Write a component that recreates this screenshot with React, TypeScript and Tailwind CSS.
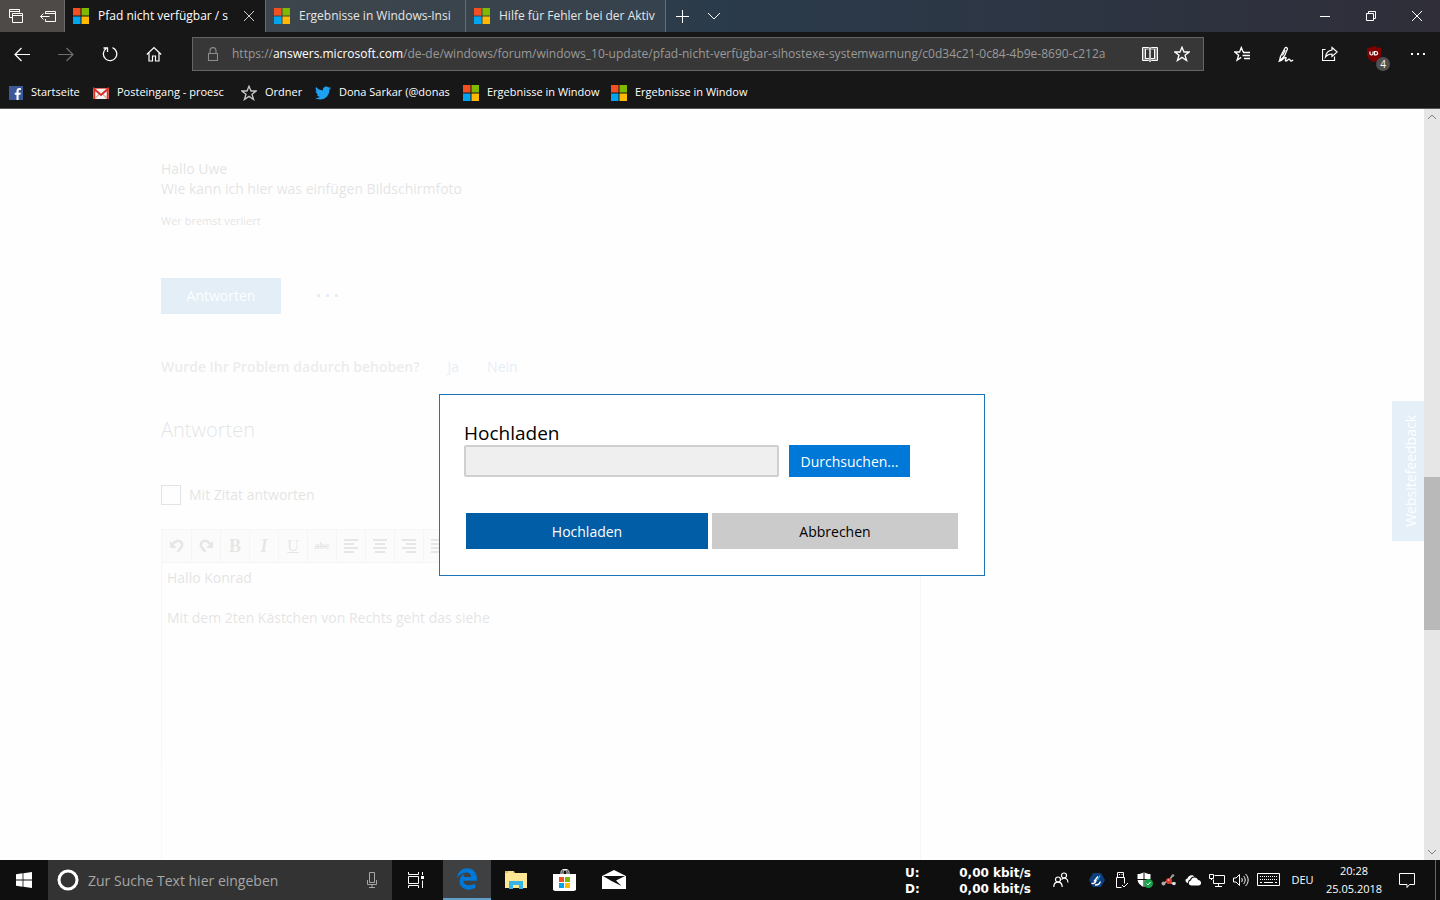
import { type ReactNode } from 'react';
import { FaEdgeLegacy, FaTwitter } from 'react-icons/fa6';

type IconProps = { size?: number; className?: string; children: ReactNode; strokeWidth?: number };

function Icon({ size = 16, className = '', children, strokeWidth = 1 }: IconProps) {
  return (
    <svg
      width={size}
      height={size}
      viewBox={`0 0 ${size} ${size}`}
      fill="none"
      stroke="currentColor"
      strokeWidth={strokeWidth}
      className={`shrink-0 ${className}`}
      aria-hidden="true"
    >
      {children}
    </svg>
  );
}

function MicrosoftLogo() {
  return (
    <Icon>
      <g stroke="none">
        <path fill="#f25022" d="M0 0h7.5v7.5H0z" />
        <path fill="#7fba00" d="M8.5 0H16v7.5H8.5z" />
        <path fill="#00a4ef" d="M0 8.5h7.5V16H0z" />
        <path fill="#ffb900" d="M8.5 8.5H16V16H8.5z" />
      </g>
    </Icon>
  );
}

function StarIcon({ className = '' }: { className?: string }) {
  return (
    <Icon className={className} strokeWidth={1.3}>
      <path d="M8 1.2 10 6h5.2l-4.2 3.3 1.6 5.2L8 11.4l-4.6 3.1L5 9.3.8 6H6z" />
    </Icon>
  );
}

const inactiveTabs = ['Ergebnisse in Windows-Insi', 'Hilfe für Fehler bei der Aktiv'];

function TabBar() {
  return (
    <div className="flex h-8 shrink-0 bg-linear-to-r from-[#4f4b48] via-[#2a3b4b] to-[#2f2e39] text-[#e6e6e6]">
      <div className="flex w-[65px] border-r border-[#6b6b6b] bg-[#4e4a48]">
        <button aria-label="Tabs anzeigen" className="flex w-8 items-center justify-center text-white">
          <Icon>
            <path d="M11.500 4.500V1.500H1.500v8h3M1.500 3.500h10M4.500 5.500h10v9h-10zM4.500 7.500h10" />
          </Icon>
        </button>
        <button aria-label="Tabs beiseitelegen" className="flex w-8 items-center justify-center text-white">
          <Icon>
            <path d="M5.500 6V3.500h10v10h-10V11M5.500 5.500h10M.5 8.500h9M3.500 5.500l-3 3 3 3" />
          </Icon>
        </button>
      </div>
      <div className="flex w-[200px] items-center bg-[#171717] pl-2 text-white">
        <button className="flex min-w-0 flex-1 items-center gap-[9px]">
          <MicrosoftLogo />
          <span className="overflow-hidden whitespace-nowrap text-left">Pfad nicht verfügbar / s</span>
        </button>
        <button aria-label="Tab schließen" className="flex h-8 w-8 items-center justify-center text-[#d0d0d0]">
          <Icon size={12}>
            <path d="m1 1 10 10M11 1 1 11" />
          </Icon>
        </button>
      </div>
      {inactiveTabs.map((title) => (
        <button
          key={title}
          className="flex w-[200px] items-center gap-[9px] border-l border-[#6b6b6b] bg-[#3c464f]/60 pr-2 pl-2"
        >
          <MicrosoftLogo />
          <span className="min-w-0 flex-1 overflow-hidden whitespace-nowrap text-left">{title}</span>
        </button>
      ))}
      <div className="flex border-l border-[#6b6b6b] text-white">
        <button aria-label="Neuer Tab" className="flex w-8 items-center justify-center">
          <Icon size={14}>
            <path d="M7.500 1v13M1 7.500h13" />
          </Icon>
        </button>
        <button aria-label="Tabvorschau" className="flex w-8 items-center justify-center">
          <Icon size={14}>
            <path d="m1 4 6 6 6-6" />
          </Icon>
        </button>
      </div>
      <div className="ml-auto flex text-white">
        <button aria-label="Minimieren" className="flex w-[46px] items-center justify-center">
          <Icon size={10}>
            <path d="M0 5.500h10" />
          </Icon>
        </button>
        <button aria-label="Verkleinern" className="flex w-[46px] items-center justify-center">
          <Icon size={10}>
            <path d="M.5 2.500h7v7h-7zM2.500 2.500v-2h7v7h-2" />
          </Icon>
        </button>
        <button aria-label="Schließen" className="flex w-[46px] items-center justify-center">
          <Icon size={10}>
            <path d="m0 0 10 10M10 0 0 10" />
          </Icon>
        </button>
      </div>
    </div>
  );
}

function NavButton({ label, children, className = '' }: { label: string; children: ReactNode; className?: string }) {
  return (
    <button aria-label={label} className={`flex h-11 w-11 items-center justify-center ${className}`}>
      {children}
    </button>
  );
}

function AddressBar() {
  return (
    <div className="flex h-11 shrink-0 items-center">
      <NavButton label="Zurück">
        <Icon strokeWidth={1.2}>
          <path d="M16 8.500H1M7.500 2 1 8.500 7.500 15" />
        </Icon>
      </NavButton>
      <NavButton label="Vorwärts" className="text-[#6f6f6f]">
        <Icon strokeWidth={1.2}>
          <path d="M0 8.500h15M8.500 2 15 8.500 8.500 15" />
        </Icon>
      </NavButton>
      <NavButton label="Aktualisieren">
        <Icon strokeWidth={1.3}>
          <path d="M10.500 1.700A6.700 6.700 0 1 1 4 2.600M1.500 2h4v4" />
        </Icon>
      </NavButton>
      <NavButton label="Startseite">
        <Icon strokeWidth={1.2}>
          <path d="m.8 8.500 7.200-7 7.200 7M3 7v8h3.500v-5h3v5H13V7" />
        </Icon>
      </NavButton>
      <div className="ml-4 flex h-[34px] min-w-0 flex-1 items-center border border-[#656565] bg-[#373737] pr-[5px]">
        <span className="flex w-[39px] shrink-0 justify-center text-[#8c8c8c]">
          <Icon strokeWidth={1.1}>
            <path d="M3.500 7.500h9v7h-9zM5 7.500V4.600a3 3 0 0 1 6 0v2.900" />
          </Icon>
        </span>
        <div
          role="textbox"
          aria-label="Adresse"
          tabIndex={0}
          className="min-w-0 flex-1 overflow-hidden whitespace-nowrap text-[#9a9a9a]"
        >
          https://<span className="text-white">answers.microsoft.com</span>
          /de-de/windows/forum/windows_10-update/pfad-nicht-verfügbar-sihostexe-systemwarnung/c0d34c21-0c84-4b9e-8690-c212a
        </div>
        <button aria-label="Leseansicht" className="flex w-8 shrink-0 items-center justify-center">
          <Icon>
            <path stroke="none" fill="#858585" d="M1 1h14v13H1z" />
            <path stroke="none" fill="#373737" d="M4 4h3v9H4zM9 4h3v9H9z" />
            <path d="M.5 1.500h6l1.500 1 1.500-1h6v13H9.500l-1.500 1-1.500-1h-6zM8 2.500V15M3.500 3v9.500H7M12.500 3v9.500H9" />
          </Icon>
        </button>
        <button aria-label="Zu Favoriten hinzufügen" className="flex w-8 shrink-0 items-center justify-center">
          <StarIcon />
        </button>
      </div>
      <div className="ml-4 flex">
        <NavButton label="Favoriten">
          <Icon strokeWidth={1.3}>
            <path d="m10 6-1-.2L7.300 1.500 5.600 6H.8l3.800 3.200-1.500 5 4-2.800M9 6.500h7M8.500 9.500H16M10 12.500h6" />
          </Icon>
        </NavButton>
        <NavButton label="Webseitennotizen">
          <Icon strokeWidth={1.3}>
            <path d="M1.500 15 2.500 10.500 7 2c.8-1.200 2.800-.3 2.300 1.200L6.500 10 1.500 15C5 14.500 5.500 11.500 7.500 11.500s-1.500 3.500.5 3.500 1.800-1.800 3-1.800 1 1.800 2.200 1.800 1-.7 2-1" />
            <path d="M7.200 4 4.500 9.500" />
          </Icon>
        </NavButton>
        <NavButton label="Teilen">
          <Icon strokeWidth={1.2}>
            <path d="M3.500 3.500h-3v11h12v-4M10 1.500 15.200 6 10 10.500V8C7 8 5 9 3.500 11c.5-4 3-6.500 6.500-7z" />
          </Icon>
        </NavButton>
        <button aria-label="uBlock, 4 blockiert" className="relative flex h-11 w-11 items-center justify-center">
          <Icon>
            <path stroke="none" fill="#800000" d="M8 0c2 1.300 4 2 7 2v6c0 4-3 6.500-7 8-4-1.500-7-4-7-8V2c3 0 5-.7 7-2z" />
            <path stroke="#fff" strokeWidth="1.200" d="M4 5.500v2.300c0 1.600 3 1.600 3 0V5.500M8.500 5.500v3.300h1.200c2.600 0 2.600-3.300 0-3.300z" />
          </Icon>
          <span className="absolute right-[6px] bottom-[5px] flex h-[14px] w-[14px] items-center justify-center rounded-full bg-[#505050] text-[10px] leading-none">
            4
          </span>
        </button>
        <NavButton label="Einstellungen und mehr">
          <Icon>
            <path stroke="none" fill="currentColor" d="M1 7h2v2H1zM7 7h2v2H7zM13 7h2v2h-2z" />
          </Icon>
        </NavButton>
      </div>
    </div>
  );
}

const favorites: { label: string; icon: ReactNode; width: string }[] = [
  {
    label: 'Startseite',
    width: 'w-[50px]',
    icon: (
      <Icon size={14}>
        <path stroke="none" fill="#3b5998" d="M0 0h14v14H0z" />
        <path stroke="none" fill="#fff" d="M7.500 14V8.800H5.800V6.700h1.700V5c0-2 1.100-3 2.900-3h1.500v2.100h-1.100c-.9 0-1.200.4-1.200 1.200v1.400h2.200l-.3 2.100H9.600V14z" />
      </Icon>
    ),
  },
  {
    label: 'Posteingang - proesc',
    width: 'w-28',
    icon: (
      <Icon>
        <path stroke="none" fill="#f2f2f2" d="M0 3h16v11H0z" />
        <path stroke="#d93025" strokeWidth="2" d="M1.200 14V4l6.800 6 6.800-6v10" />
        <path stroke="#d93025" strokeWidth=".7" d="m2 13.500 4.500-4.500M14 13.500 9.500 9M0 3.500h16" />
      </Icon>
    ),
  },
  { label: 'Ordner', width: 'w-[38px]', icon: <StarIcon className="text-[#c8c8c8]" /> },
  { label: 'Dona Sarkar (@donas', width: 'w-28', icon: <FaTwitter size={16} color="#1da1f2" className="shrink-0" /> },
  { label: 'Ergebnisse in Window', width: 'w-28', icon: <MicrosoftLogo /> },
  { label: 'Ergebnisse in Window', width: 'w-28', icon: <MicrosoftLogo /> },
];

function FavoritesBar() {
  return (
    <nav className="flex h-[33px] shrink-0 items-center gap-3 border-b border-[#555] pt-px pl-[9px] text-[11px]">
      {favorites.map(({ label, icon, width }, index) => (
        <a key={index} href="#" className="flex items-center gap-2">
          {icon}
          <span className={`whitespace-nowrap ${width}`}>{label}</span>
        </a>
      ))}
    </nav>
  );
}

function AlignIcon({ d }: { d: string }) {
  return (
    <Icon strokeWidth={2}>
      <path d={d} />
    </Icon>
  );
}

const editorTools: { label: string; icon: ReactNode }[] = [
  {
    label: 'Rückgängig',
    icon: (
      <Icon strokeWidth={2.5}>
        <path d="M3 7c3-4.500 7-5 9-3 2.500 2.500 1 5-3.500 10" />
        <path stroke="none" fill="currentColor" d="M1 3v7h7z" />
      </Icon>
    ),
  },
  {
    label: 'Wiederholen',
    icon: (
      <Icon strokeWidth={2.5}>
        <path d="M13 7c-3-4.500-7-5-9-3-2.500 2.500-1 5 3.500 10" />
        <path stroke="none" fill="currentColor" d="M15 3v7H8z" />
      </Icon>
    ),
  },
  { label: 'Fett', icon: <b className="text-lg">B</b> },
  { label: 'Kursiv', icon: <b className="text-lg italic">I</b> },
  { label: 'Unterstrichen', icon: <span className="text-base underline">U</span> },
  { label: 'Durchgestrichen', icon: <b className="text-[10px] line-through">abc</b> },
  { label: 'Linksbündig', icon: <AlignIcon d="M1 2h14M1 6h10M1 10h14M1 14h10" /> },
  { label: 'Zentriert', icon: <AlignIcon d="M1 2h14M3 6h10M1 10h14M3 14h10" /> },
  { label: 'Rechtsbündig', icon: <AlignIcon d="M1 2h14M5 6h10M1 10h14M5 14h10" /> },
  { label: 'Blocksatz', icon: <AlignIcon d="M1 2h14M1 6h14M1 10h14M1 14h14" /> },
];

function ForumPage() {
  return (
    <div className="flex min-w-0 flex-1 flex-col pt-[50px] pl-[161px] text-[14px] leading-5 text-black opacity-10">
      <p>
        Hallo Uwe
        <br />
        Wie kann ich hier was einfügen Bildschirmfoto
      </p>
      <p className="mt-3 text-[11px] leading-5">Wer bremst verliert</p>
      <div className="mt-[47px] flex items-center gap-9">
        <button className="h-9 w-[120px] bg-[#0067b8] text-white">Antworten</button>
        <button aria-label="Weitere Optionen" className="text-[#0067f0]">
          <Icon size={22}>
            <path stroke="none" fill="currentColor" d="M0 9h3v3H0zM9 9h3v3H9zM18 9h3v3h-3z" />
          </Icon>
        </button>
      </div>
      <div className="mt-[43px] flex gap-7">
        <span className="font-semibold text-[#555]">Wurde Ihr Problem dadurch behoben?</span>
        <a href="#" className="text-[#0067b8]">
          Ja
        </a>
        <a href="#" className="text-[#0067d8]">
          Nein
        </a>
      </div>
      <h2 className="mt-[39px] text-xl leading-7 font-light">Antworten</h2>
      <label className="mt-[41px] flex items-center gap-2">
        <input type="checkbox" className="h-5 w-5 appearance-none border border-black" />
        Mit Zitat antworten
      </label>
      <div className="mt-6 flex w-[760px] flex-1 flex-col border border-b-0 border-black/25">
        <div className="flex h-[33px] shrink-0 border-b border-black/25 bg-black/10 pl-px font-['Liberation_Serif',serif] text-[#222]">
          {editorTools.map(({ label, icon }) => (
            <button
              key={label}
              aria-label={label}
              className="flex w-[29px] items-center justify-center border-r border-black/25"
            >
              {icon}
            </button>
          ))}
        </div>
        <textarea
          aria-label="Antworttext"
          className="w-full flex-1 resize-none px-[5px] py-[5px] outline-none"
          defaultValue={'Hallo Konrad\n\nMit dem 2ten Kästchen von Rechts geht das siehe'}
        />
      </div>
    </div>
  );
}

function UploadDialog() {
  return (
    <div className="absolute inset-0 flex items-center justify-center">
      <div
        role="dialog"
        aria-labelledby="upload-title"
        className="w-[546px] border border-[#1f74b7] bg-white py-[26px] pr-[26px] pl-6 text-[14px] text-black"
      >
        <label id="upload-title" htmlFor="upload-file" className="block text-[19px] leading-6">
          Hochladen
        </label>
        <div className="flex gap-[10px]">
          <input
            id="upload-file"
            type="text"
            readOnly
            className="h-8 w-[315px] rounded-xs border-2 border-[#cfcfcf] bg-[#efefef] px-2"
          />
          <button className="h-8 w-[121px] bg-[#0078d7] pt-px text-white">Durchsuchen...</button>
        </div>
        <div className="mt-9 ml-[2px] flex gap-1">
          <button className="h-9 w-[242px] bg-[#005da6] pt-px text-white">Hochladen</button>
          <button className="h-9 flex-1 bg-[#cbcbcb] pt-px">Abbrechen</button>
        </div>
      </div>
    </div>
  );
}

function Scrollbar() {
  return (
    <div className="flex w-4 shrink-0 flex-col bg-[#e6e6e6] text-[#808080]">
      <button aria-label="Nach oben" className="flex h-4 items-center justify-center">
        <Icon size={8}>
          <path d="m0 6 4-4 4 4" />
        </Icon>
      </button>
      <div className="grow-[352]" />
      <div className="h-[153px] bg-[#b9b9b9]" />
      <div className="grow-[214]" />
      <button aria-label="Nach unten" className="flex h-4 items-center justify-center">
        <Icon size={8}>
          <path d="m0 2 4 4 4-4" />
        </Icon>
      </button>
    </div>
  );
}

function TaskButton({ label, children, className = '' }: { label: string; children: ReactNode; className?: string }) {
  return (
    <button aria-label={label} className={`flex h-10 w-12 items-center justify-center ${className}`}>
      {children}
    </button>
  );
}

const trayIcons: { label: string; icon: ReactNode }[] = [
  {
    label: 'Malwareschutz',
    icon: (
      <Icon>
        <path stroke="none" fill="#0d3f7d" d="m4 1 8 0 4 7-4 7H4L0 8z" />
        <path stroke="#fff" strokeWidth="1.500" d="M2.500 11.500c3 .5 5-1.500 4.500-5M6 13c3 0 5.500-1 5-3.500M5 9.500l4-5" />
        <path stroke="#19a7e8" strokeWidth="1.500" d="m8.500 8 2.500-4.500" />
      </Icon>
    ),
  },
  {
    label: 'Hardware sicher entfernen',
    icon: (
      <Icon>
        <path d="M8.500 15.500h-5v-10h8v6M4.500 5.500v-5h6v5M6 2.500h1M8.500 2.500h1M9 13l2 2 4-4" />
      </Icon>
    ),
  },
  {
    label: 'Windows-Sicherheit',
    icon: (
      <Icon>
        <path stroke="none" fill="#fff" d="M7 0c2 1.500 4 2 6.500 2v5c0 4-3 6.500-6.500 8C3.500 13.500.5 11 .5 7V2C3 2 5 1.500 7 0z" />
        <path stroke="#0f0f0f" d="M7 0v15M0 7.500h14" />
        <circle cx="11.500" cy="11.500" r="4.500" stroke="none" fill="#16a34a" />
        <path stroke="#fff" d="m9.500 11.500 1.500 1.500 2.500-3" />
      </Icon>
    ),
  },
  {
    label: 'Systemmonitor',
    icon: (
      <Icon>
        <path stroke="#b8b8b8" strokeWidth="1.500" d="m2 12 4-3 7 3M9 7l3-4" />
        <circle cx="8" cy="9" r="3" stroke="none" fill="#e03a2c" />
        <circle cx="7.500" cy="8" r="1" stroke="none" fill="#ffb3a8" />
        <circle cx="2.500" cy="11.500" r="2" stroke="none" fill="#aaa" />
        <circle cx="13" cy="11.500" r="1.800" stroke="none" fill="#ddd" />
        <circle cx="12" cy="3.500" r="1.300" stroke="none" fill="#999" />
      </Icon>
    ),
  },
  {
    label: 'OneDrive',
    icon: (
      <Icon>
        <path stroke="none" fill="#fff" d="M3 11C0 10.500-.5 7 2.500 6.500 3 3.500 7 2 9.500 4.500 6.500 4.500 5.500 6 5 7.500 3.500 8 2.800 9.500 3 11z" />
        <path stroke="none" fill="#fff" d="M6.500 13.500c-3.500 0-3.500-4.500-.5-5 .5-3.500 5.500-4 7-.5 4 0 4 5.500.5 5.500z" />
      </Icon>
    ),
  },
  {
    label: 'Netzwerk',
    icon: (
      <Icon>
        <path d="M5.500 3.500h10v8h-11v-4M.5 2.500h4v4h-4zM2.500 6.500V8M9.500 11.500v3M6 14.500h7" />
      </Icon>
    ),
  },
  {
    label: 'Lautstärke',
    icon: (
      <Icon>
        <path d="M.5 6H3l3.500-3.500v11L3 10H.5zM8.500 6c1 1 1 3 0 4M10.500 4c2.200 2 2.200 6 0 8M12.500 2c3.500 3 3.500 9 0 12" />
      </Icon>
    ),
  },
];

function Taskbar() {
  return (
    <footer className="flex h-10 shrink-0 bg-[#0f0f0f] text-white">
      <TaskButton label="Start">
        <Icon>
          <path stroke="none" fill="#fff" d="M0 2.300 6.600 1.300v6.200H0zM7.400 1.200 16 0v7.500H7.400zM0 8.500h6.600v6.200L0 13.700zM7.400 8.500H16V16l-8.600-1.200z" />
        </Icon>
      </TaskButton>
      <div className="flex w-[344px] items-center gap-2 bg-[#333] px-2 text-[#a6a6a6]">
        <Icon size={24} className="text-white" strokeWidth={3}>
          <circle cx="12" cy="12" r="9" />
        </Icon>
        <input
          type="search"
          aria-label="Suche"
          placeholder="Zur Suche Text hier eingeben"
          className="min-w-0 flex-1 bg-transparent text-[14px] outline-none placeholder:text-[#a6a6a6]"
        />
        <button aria-label="Spracheingabe" className="flex w-6 justify-center">
          <Icon>
            <path d="M5.500.5h5v10h-5zM3.500 8v4.500h9V8M8 12.500v3M5 15.500h6" />
          </Icon>
        </button>
      </div>
      <TaskButton label="Aktive Anwendungen">
        <Icon>
          <path d="M.5 0v2.500h10V0M.5 16v-2.500h10V16M.5 4.500h10v7H.5zM14.500 0v3M14.500 8.500V16" />
          <path stroke="none" fill="#fff" d="M13 4h3v3h-3z" />
        </Icon>
      </TaskButton>
      <div className="ml-[3px] flex gap-px">
        <TaskButton label="Microsoft Edge" className="border-b-2 border-[#5f9fc7] bg-[#3f4042]">
          <FaEdgeLegacy size={22} color="#0078d7" />
        </TaskButton>
        <TaskButton label="Explorer">
          <Icon size={22}>
            <g stroke="none">
              <path fill="#f0c23c" d="M0 2h9l1 2h12v15H0z" />
              <path fill="#ffe694" d="M0 4h22v15H0z" />
              <path fill="#fff" d="M3 2.500h5v1H3z" />
              <path fill="#37b3e8" d="M4 12h14v8h-4v-4H8v4H4z" />
            </g>
          </Icon>
        </TaskButton>
        <TaskButton label="Microsoft Store">
          <Icon size={24}>
            <path d="M8 7V4.500C8 .500 14 .500 14 4.500V7M10 7V4.500C10 .500 16 .500 16 4.500V7" />
            <path stroke="none" fill="#fff" d="M0 6h23v16l-2 1H2l-2-1z" />
            <path stroke="none" fill="#f25022" d="M6 9h5v5H6z" />
            <path stroke="none" fill="#7fba00" d="M12 9h5v5h-5z" />
            <path stroke="none" fill="#00a4ef" d="M6 15h5v5H6z" />
            <path stroke="none" fill="#ffb900" d="M12 15h5v5h-5z" />
          </Icon>
        </TaskButton>
        <TaskButton label="Mail">
          <Icon size={24}>
            <path stroke="none" fill="#fff" d="M0 8 12 2l12 6v13H0z" />
            <path stroke="none" fill="#0f0f0f" d="M1 8h22l-9 4.500 5.500 5.500L9.500 13z" />
          </Icon>
        </TaskButton>
      </div>
      <div className="ml-auto flex items-center">
        <dl className="grid w-[126px] grid-cols-[auto_1fr] pt-px font-['DejaVu_Sans',sans-serif] text-[12px] leading-4 font-bold">
          <dt>U:</dt>
          <dd className="text-right">0,00 kbit/s</dd>
          <dt>D:</dt>
          <dd className="text-right">0,00 kbit/s</dd>
        </dl>
        <button aria-label="Kontakte" className="ml-[22px] flex">
          <Icon strokeWidth={1.2}>
            <circle cx="5" cy="7.500" r="2.500" />
            <path d="M.8 15c0-6.500 8.400-6.500 8.400 0" />
            <circle cx="11" cy="3.500" r="2.500" />
            <path d="M8.500 7.500c3-3 6.500-.5 6.500 3" />
          </Icon>
        </button>
        <div className="ml-5 flex gap-2">
          {trayIcons.map(({ label, icon }) => (
            <button key={label} aria-label={label}>
              {icon}
            </button>
          ))}
        </div>
        <button aria-label="Bildschirmtastatur" className="ml-2 flex">
          <svg width="23" height="14" viewBox="0 0 23 14" fill="none" stroke="#fff" aria-hidden="true">
            <path d="M.5.5h22v12H.5z" />
            <path strokeDasharray="1 1" d="M3 3.500h17M3 6.500h17" />
            <path d="M3 9.500h2M7 9.500h9M18 9.500h2" />
          </svg>
        </button>
        <button className="ml-[11px] w-[23px] text-[11px]">DEU</button>
        <button className="ml-3 w-[56px] text-center text-[11px] leading-[18px]">
          20:28
          <br />
          25.05.2018
        </button>
        <button aria-label="Info-Center" className="mx-[17px] flex">
          <Icon size={16}>
            <path d="M.5 1.500h15v11h-5l-2.500 3v-3H.5z" />
          </Icon>
        </button>
        <button aria-label="Desktop anzeigen" className="ml-[3px] h-10 w-[5px] border-l border-[#666]" />
      </div>
    </footer>
  );
}

export default function App() {
  return (
    <div className="flex h-screen flex-col overflow-hidden bg-[#171717] font-['Open_Sans','Noto_Sans',sans-serif] text-[12px] text-white">
      <header className="flex shrink-0 flex-col">
        <TabBar />
        <AddressBar />
        <FavoritesBar />
      </header>
      <div className="flex min-h-0 flex-1 bg-[#fefefe]">
        <main className="relative flex min-w-0 flex-1 overflow-hidden">
          <ForumPage />
          <button className="absolute top-[292px] right-0 flex h-[140px] w-8 items-center justify-center bg-[#e4eff8] pl-1 text-[14px] text-white">
            <span className="rotate-180 [writing-mode:vertical-rl]">Websitefeedback</span>
          </button>
          <UploadDialog />
        </main>
        <Scrollbar />
      </div>
      <Taskbar />
    </div>
  );
}
